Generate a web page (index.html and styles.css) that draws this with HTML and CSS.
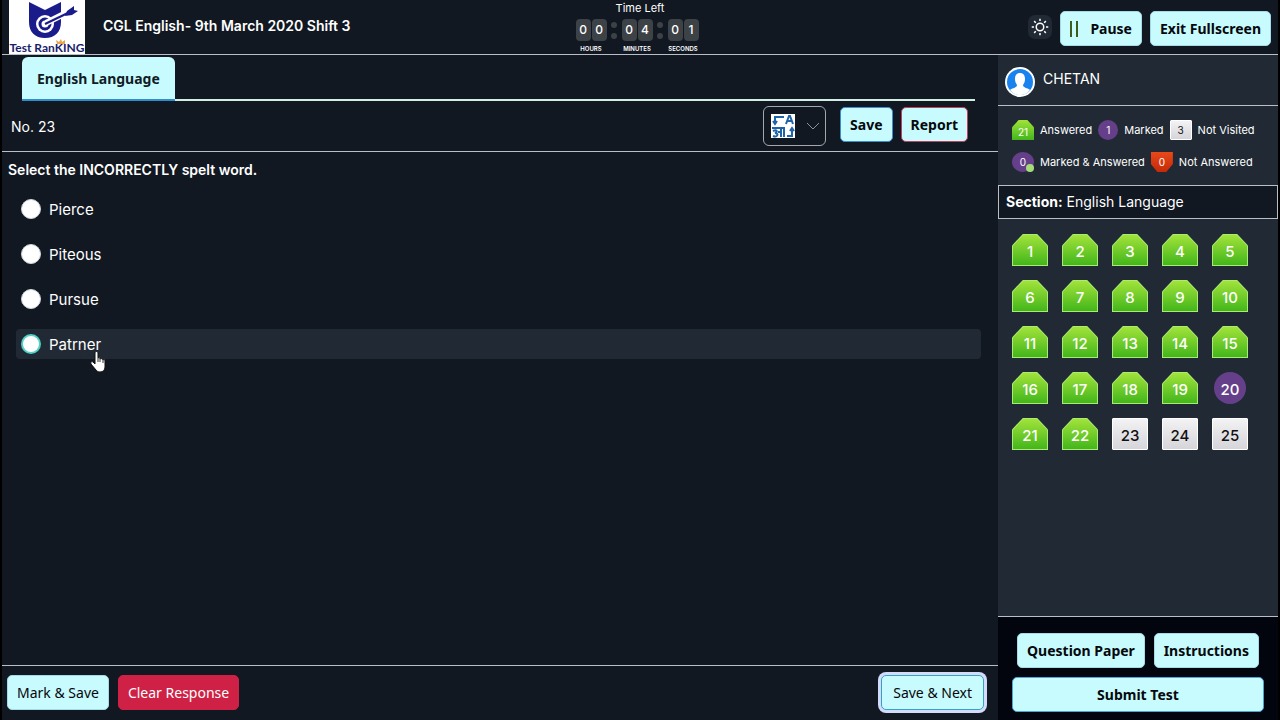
FILE: index.html
```html
<!DOCTYPE html>
<html lang="en">
<head>
  <meta charset="UTF-8" />
  <meta name="viewport" content="width=device-width, initial-scale=1" />
  <title>CGL English - Test RanKING</title>

  <link rel="stylesheet" href="styles.css">
</head>

<body>
  <!-- ===== HEADER ===== -->
  <header class="header-bar">
    <div class="header-left">
      <div class="logo">
        <svg viewBox="0 0 76 54" aria-hidden="true">
          <path fill="#1b1c8c" d="M20 2l16 8 16-8v20c0 10-6 16-16 16s-16-6-16-16z" />
          <circle cx="36" cy="24" r="9" fill="#fff" />
          <circle cx="36" cy="24" r="5" fill="#fff" stroke="#1b1c8c" stroke-width="3" />
          <path d="M37 23l18-9" stroke="#fff" stroke-width="6" />
          <path d="M36 24l27-13" stroke="#1b1c8c" stroke-width="2" />
          <path fill="#1b1c8c" d="M58 11l7-5 0 4 4 1-6 4-7 1z" />
          <path fill="#e9a54a" d="M48 44l-1-4 3 2 2-3 1 3 3-2 0 4z" />
          <text x="38" y="52" class="logo-text">Test RanKING</text>
        </svg>
      </div>
      <h1 class="test-title">CGL English- 9th March 2020 Shift 3</h1>
    </div>

    <div class="timer">
      <div class="timer-title">Time Left</div>
      <div class="timer-row">
        <div class="unit">
          <div class="digits"><span>0</span><span>0</span></div>
          <div class="unit-label">HOURS</div>
        </div>
        <div class="colon"></div>
        <div class="unit">
          <div class="digits"><span>0</span><span>4</span></div>
          <div class="unit-label">MINUTES</div>
        </div>
        <div class="colon"></div>
        <div class="unit">
          <div class="digits"><span>0</span><span>1</span></div>
          <div class="unit-label">SECONDS</div>
        </div>
      </div>
    </div>

    <div class="header-right">
      <button class="theme-btn" aria-label="Toggle theme">
        <svg viewBox="0 0 24 24" width="18" height="18">
          <circle cx="12" cy="12" r="5" />
          <path d="M12 1v3M12 20v3M1 12h3M20 12h3M4.200 4.200l2.200 2.200M17.600 17.600l2.200 2.200M4.200 19.800l2.200-2.200M17.600 6.400l2.200-2.200" />
        </svg>
      </button>
      <button class="btn bold pause-btn">
        <svg viewBox="0 0 9 16" width="9" height="16"><path d="M1 0v16M7 0v16" stroke="#3d5c1c" stroke-width="2" /></svg>
        Pause
      </button>
      <button class="btn bold">Exit Fullscreen</button>
    </div>
  </header>

  <div class="page">
    <!-- ===== QUESTION SIDE ===== -->
    <main class="question-side">
      <nav class="tabs">
        <button class="tab">English Language</button>
      </nav>

      <div class="question-bar">
        <div class="question-no">No. 23</div>
        <div class="question-tools">
          <div class="lang">
            <svg class="lang-icon" viewBox="0 0 24 24" width="24" height="24" aria-hidden="true">
              <rect width="24" height="24" fill="#fff" />
              <g fill="none" stroke="#1f63a8" stroke-width="2">
                <path d="M13 3H4v6M2 7l2 3 2-3" />
                <path d="M15 10l3-8h1l3 8M16 7h5" />
                <path d="M1 14h13M2 17c4-2 5 1 2 2 4 0 3 5-2 3M7 18h3M10 14v9M13 14v9" />
                <path d="M16 22h5v-6M19 17l2-3 2 3" />
              </g>
            </svg>
            <select class="lang-select" aria-label="Language">
              <option value="en" aria-label="English"></option>
            </select>
            <svg class="chevron" viewBox="0 0 14 8" width="14" height="8" aria-hidden="true"><path d="M1 1l6 6 6-6" /></svg>
          </div>
          <button class="btn bold save-btn">Save</button>
          <button class="btn bold report-btn">Report</button>
        </div>
      </div>

      <form class="question">
        <p class="question-text">Select the INCORRECTLY spelt word.</p>
        <label class="option"><input type="radio" name="answer"> Pierce</label>
        <label class="option"><input type="radio" name="answer"> Piteous</label>
        <label class="option"><input type="radio" name="answer"> Pursue</label>
        <label class="option active">
          <input type="radio" name="answer"> Patrner
          <svg class="pointer" viewBox="0 0 16 22" width="16" height="22" aria-hidden="true">
            <path d="M5 2c0-2 3-2 3 0v5c1-1 2 0 2 1 1-1 3 0 3 1 1-1 2 0 2 1v6c0 3-2 5-5 5-2 0-3-1-4-2l-5-6c-1-2 1-3 2-2l2 2z" fill="#fff" stroke="#111" stroke-width="1" />
            <path d="M8 7v4M10 8v3M13 9v3" stroke="#333" />
          </svg>
        </label>
      </form>

      <footer class="question-footer">
        <button class="btn mark-btn">Mark &amp; Save</button>
        <button class="btn clear-btn">Clear Response</button>
        <button class="btn next-btn">Save &amp; Next</button>
      </footer>
    </main>

    <!-- ===== SIDEBAR ===== -->
    <aside class="sidebar">
      <div class="user">
        <svg viewBox="0 0 30 30" width="30" height="30" aria-hidden="true">
          <circle cx="15" cy="15" r="15" fill="#fff" />
          <circle cx="15" cy="15" r="13" fill="#1a82ee" />
          <path d="M15 6c-3 0-5 2-5 6 0 3 1 4 2 6 0 3-5 3-7 5 3 4 6 5 10 5s7-1 10-5c-2-2-7-2-7-5 1-2 2-3 2-6 0-4-2-6-5-6z" fill="#fff" />
        </svg>
        <span class="user-name">CHETAN</span>
      </div>

      <div class="legend">
        <div class="legend-row">
          <span class="badge answered">21</span><span>Answered</span>
          <span class="badge marked">1</span><span>Marked</span>
          <span class="badge not-visited">3</span><span>Not Visited</span>
        </div>
        <div class="legend-row">
          <span class="badge marked-answered">0</span><span>Marked &amp; Answered</span>
          <span class="badge not-answered">0</span><span>Not Answered</span>
        </div>
      </div>

      <div class="section-name"><b>Section:</b> English Language</div>

      <div class="palette">
        <button class="tile answered">1</button>
        <button class="tile answered">2</button>
        <button class="tile answered">3</button>
        <button class="tile answered">4</button>
        <button class="tile answered">5</button>
        <button class="tile answered">6</button>
        <button class="tile answered">7</button>
        <button class="tile answered">8</button>
        <button class="tile answered">9</button>
        <button class="tile answered">10</button>
        <button class="tile answered">11</button>
        <button class="tile answered">12</button>
        <button class="tile answered">13</button>
        <button class="tile answered">14</button>
        <button class="tile answered">15</button>
        <button class="tile answered">16</button>
        <button class="tile answered">17</button>
        <button class="tile answered">18</button>
        <button class="tile answered">19</button>
        <button class="tile marked">20</button>
        <button class="tile answered">21</button>
        <button class="tile answered">22</button>
        <button class="tile not-visited">23</button>
        <button class="tile not-visited">24</button>
        <button class="tile not-visited">25</button>
      </div>

      <div class="sidebar-footer">
        <div class="sidebar-links">
          <button class="btn bold">Question Paper</button>
          <button class="btn bold">Instructions</button>
        </div>
        <button class="btn bold submit-btn">Submit Test</button>
      </div>
    </aside>
  </div>
</body>
</html>
```

FILE: styles.css
```css
/* === PALETTE VARIABLES === */
:root {
  --bg: #111822;
  --panel: #212a34;
  --dark: #02050e;
  --cyan: #c8fbfd;
  --line: #b9bfc5;
  --white: #ffffff;
}

/* 1) Reset + base */
* {
  margin: 0;
  padding: 0;
  box-sizing: border-box;
}
body {
  background-color: #000;
  color: var(--white);
  font-family: Inter, sans-serif;
  font-size: 14px;
  display: flex;
  flex-direction: column;
  height: 100vh;
  padding: 0 2px;
}
button {
  font-family: inherit;
  border: none;
  cursor: pointer;
}

/* 2) Shared buttons */
.btn {
  display: flex;
  align-items: center;
  justify-content: center;
  height: 35px;
  padding: 0 9px;
  border: 1px solid #a5dbe8;
  border-radius: 5px;
  background-color: var(--cyan);
  color: #05080c;
  font-family: "Noto Sans", sans-serif;
  font-size: 14px;
  white-space: nowrap;
}
.btn.bold {
  font-weight: 700;
}

/* 3) Header bar */
.header-bar {
  display: grid;
  grid-template-columns: 1fr auto 1fr;
  height: 55px;
  flex-shrink: 0;
  background-color: var(--bg);
  border-bottom: 1px solid var(--line);
}
.header-left {
  display: flex;
  gap: 18px;
  padding-left: 7px;
}
.logo {
  width: 76px;
  height: 54px;
  background-color: var(--white);
}
.logo svg {
  display: block;
}
.logo-text {
  font-family: Lato, sans-serif;
  font-size: 12px;
  font-weight: 700;
  fill: #1b1c6c;
  text-anchor: middle;
}
.test-title {
  font-size: 14px;
  font-weight: 600;
  line-height: 52px;
  white-space: nowrap;
}
.header-right {
  display: flex;
  justify-content: flex-end;
  align-items: center;
  gap: 8px;
  padding: 0 7px 0 0;
}
.theme-btn {
  display: flex;
  align-items: center;
  justify-content: center;
  width: 24px;
  height: 24px;
  margin-bottom: 4px;
  border-radius: 7px;
  background-color: var(--panel);
}
.theme-btn svg {
  fill: none;
  stroke: var(--white);
  stroke-width: 2;
}
.pause-btn {
  gap: 11px;
}

/* 4) Timer */
.timer {
  text-align: center;
}
.timer-title {
  font-size: 11px;
  line-height: 17px;
}
.timer-row {
  display: flex;
  padding: 2px 6px 0 0;
}
.unit {
  width: 31px;
}
.digits {
  display: flex;
  gap: 1px;
}
.digits span {
  flex: 1;
  border-radius: 4px;
  background-color: #3c4246;
  font-size: 12px;
  font-weight: 500;
  line-height: 22px;
}
.unit-label {
  display: flex;
  justify-content: center;
  font-size: 6px;
  font-weight: 600;
  line-height: 16px;
}
.colon {
  display: flex;
  flex-direction: column;
  align-items: center;
  gap: 5px;
  width: 15px;
  padding-top: 3px;
}
.colon::before,
.colon::after {
  content: "";
  width: 6px;
  height: 6px;
  border-radius: 50%;
  background-color: #3c4246;
}

/* 5) Page columns */
.page {
  display: flex;
  flex: 1;
  min-height: 0;
}
.question-side {
  display: flex;
  flex-direction: column;
  flex: 1;
  min-width: 0;
  background-color: var(--bg);
}
.tabs {
  display: flex;
  margin: 2px 23px 0 20px;
  border-bottom: 2px solid #d3eee4;
}
.tab {
  height: 44px;
  margin-bottom: -2px;
  padding: 0 15px;
  border-bottom: 2px solid #2d8fd0;
  border-radius: 6px 6px 0 0;
  background-color: var(--cyan);
  color: #101c26;
  font-family: "Noto Sans", sans-serif;
  font-size: 14px;
  font-weight: 700;
}

/* 6) Question bar */
.question-bar {
  display: flex;
  align-items: center;
  justify-content: space-between;
  height: 51px;
  padding: 0 30px 0 9px;
  border-bottom: 1px solid var(--line);
}
.question-tools {
  display: flex;
  align-items: center;
  gap: 8px;
}
.question-tools .btn {
  margin-bottom: 4px;
}
.lang {
  position: relative;
  display: flex;
  align-items: center;
  height: 40px;
  margin-right: 6px;
  padding-left: 7px;
  border: 1px solid #a4a8ad;
  border-radius: 6px;
}
.lang-select {
  appearance: none;
  width: 30px;
  height: 38px;
  border: none;
  background: none;
}
.chevron {
  position: absolute;
  right: 5px;
  fill: none;
  stroke: #8d9299;
  stroke-width: 1;
  pointer-events: none;
}
.save-btn {
  border-color: #3a8fd0;
}
.report-btn {
  border-color: #c2405c;
}

/* 7) Question and options */
.question {
  flex: 1;
  padding: 8px 17px 0 14px;
}
.question-text {
  margin: 0 0 14px -8px;
  font-weight: 600;
  line-height: 20px;
}
.option {
  position: relative;
  display: flex;
  align-items: center;
  gap: 8px;
  height: 30px;
  margin-bottom: 15px;
  padding-left: 5px;
  border-radius: 4px;
  font-size: 15px;
}
.option input {
  appearance: none;
  width: 20px;
  height: 20px;
  border: 1px solid #cfd5da;
  border-radius: 50%;
  background-color: var(--white);
}
.option.active {
  background-color: var(--panel);
}
.option.active input {
  border: 2px solid #4fd1c5;
}
.pointer {
  position: absolute;
  left: 74px;
  top: 22px;
}

/* 8) Question footer */
.question-footer {
  display: flex;
  align-items: center;
  gap: 9px;
  height: 55px;
  padding: 0 14px 1px 5px;
  border-top: 1px solid var(--line);
}
.clear-btn {
  border-color: #cf2145;
  background-color: #cf2145;
  color: var(--white);
}
.next-btn {
  margin-left: auto;
  padding: 0 11px;
  border-color: #35a3c4;
  box-shadow: 0 0 0 3px #d4dbfa;
}

/* 9) Sidebar */
.sidebar {
  display: flex;
  flex-direction: column;
  width: 280px;
  background-color: var(--panel);
}
.user {
  display: flex;
  align-items: center;
  gap: 8px;
  height: 51px;
  padding: 3px 7px 0;
  border-bottom: 1px solid var(--line);
}
.user-name {
  padding-bottom: 6px;
}
.legend {
  display: flex;
  flex-direction: column;
  gap: 12px;
  padding: 14px 0 13px 14px;
  font-size: 11px;
}
.legend-row {
  display: flex;
  align-items: center;
  gap: 6px;
  white-space: nowrap;
}
.badge {
  width: 22px;
  height: 20px;
  font-size: 10px;
  line-height: 20px;
  text-align: center;
}

/* 10) Question states, used by badges and tiles */
.answered {
  background: linear-gradient(#a2e33a, #43b61b);
  color: var(--white);
  clip-path: polygon(0 36%, 30% 0, 70% 0, 100% 36%, 100% 100%, 0 100%);
}
.badge.answered {
  line-height: 24px;
}
.marked {
  border-radius: 50%;
  background-color: #663f8b;
  color: var(--white);
}
.badge.marked {
  width: 20px;
}
.not-visited {
  border: 1px solid #fff;
  border-radius: 1px;
  background: linear-gradient(#f3f3f5, #d5d5da);
  color: #111;
}
.badge.not-visited {
  line-height: 18px;
}
.marked-answered {
  position: relative;
  border-radius: 50%;
  background-color: #663f8b;
}
.marked-answered::after {
  content: "";
  position: absolute;
  right: 0;
  bottom: 0;
  width: 8px;
  height: 8px;
  border-radius: 50%;
  background-color: #a6dd78;
}
.not-answered {
  background: linear-gradient(#e8481a, #c52a08);
  clip-path: polygon(0 0, 100% 0, 100% 60%, 70% 100%, 30% 100%, 0 60%);
}

/* 11) Section name and palette */
.section-name {
  height: 34px;
  padding-left: 7px;
  border: 1px solid var(--line);
  background-color: var(--bg);
  line-height: 32px;
}
.palette {
  display: grid;
  grid-template-columns: repeat(5, 36px);
  gap: 14px;
  padding: 15px 14px;
}
.tile {
  position: relative;
  z-index: 0;
  height: 32px;
  padding-top: 3px;
  font-size: 15px;
  font-weight: 500;
}
.tile.answered {
  background: #a9ec74;
}
.tile.answered::before {
  content: "";
  position: absolute;
  inset: 1px;
  z-index: -1;
  background: linear-gradient(#a2e33a, #43b61b);
  clip-path: polygon(0 36%, 30% 0, 70% 0, 100% 36%, 100% 100%, 0 100%);
}
.tile.marked {
  width: 32px;
  justify-self: center;
}

/* 12) Sidebar footer */
.sidebar-footer {
  display: flex;
  flex-direction: column;
  gap: 9px;
  margin-top: auto;
  padding: 16px 14px 8px;
  border-top: 1px solid var(--line);
  background-color: var(--dark);
}
.sidebar-links {
  display: flex;
  justify-content: space-between;
  padding: 0 5px;
}
.submit-btn {
  border-color: #4aa5d8;
}
```
